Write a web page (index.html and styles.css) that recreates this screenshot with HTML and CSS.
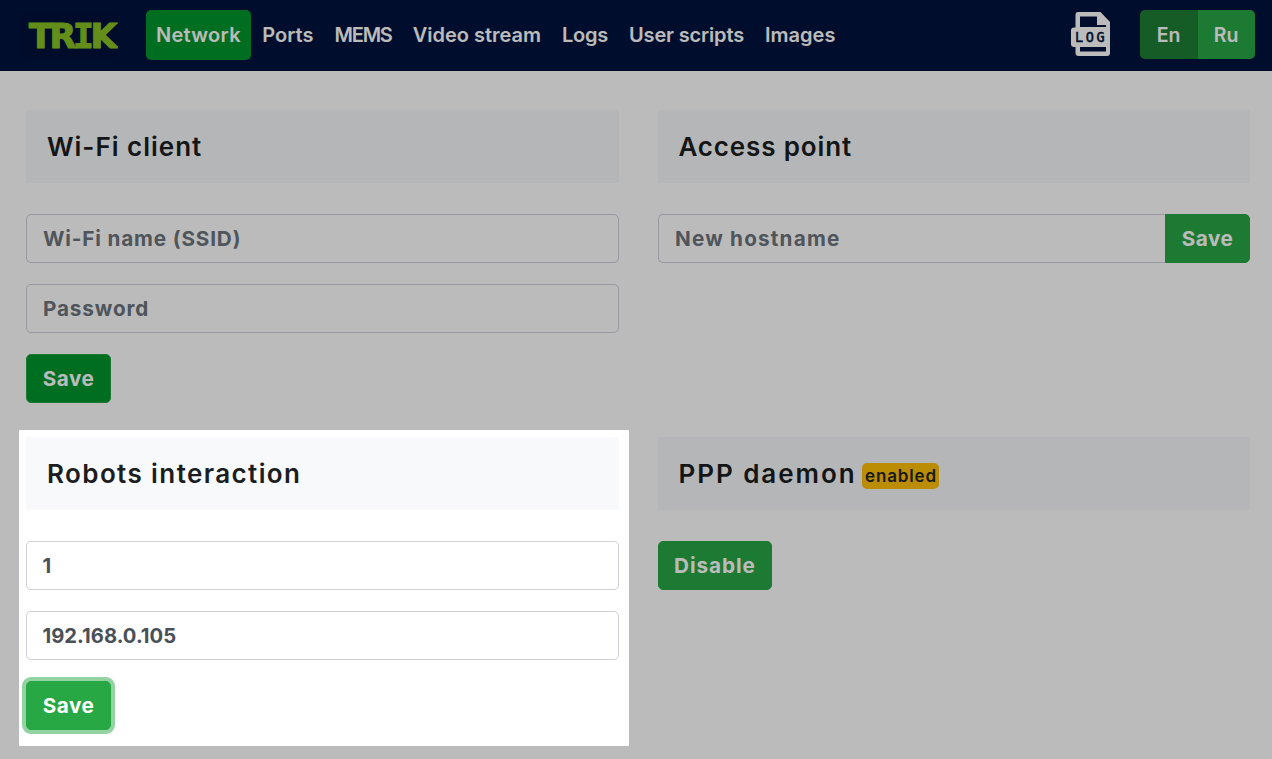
FILE: index.html
```
<!DOCTYPE html>
<html lang="en">
<head>
<meta charset="utf-8">
<title>TRIK</title>
<link rel="stylesheet" href="styles.css">
</head>
<body>
<header class="navbar">
  <a class="brand" href="#">
    <svg width="98" height="46" viewBox="0 0 98 46" role="img" aria-label="TRIK">
      <text class="brand-text" x="9" y="35.500">TR<tspan class="brand-slab">I</tspan>K</text>
    </svg>
  </a>
  <nav class="menu">
    <a class="menu-link active" href="#">Network</a>
    <a class="menu-link" href="#">Ports</a>
    <a class="menu-link mems" href="#">MEMS</a>
    <a class="menu-link" href="#">Video stream</a>
    <a class="menu-link logs" href="#">Logs</a>
    <a class="menu-link scripts" href="#">User scripts</a>
    <a class="menu-link" href="#">Images</a>
  </nav>
  <a class="log-icon" href="#">
    <svg width="40" height="44" viewBox="0 0 40 44" role="img" aria-label="Log">
      <path fill="#fff" fill-rule="evenodd" d="M7 0H29.500L39 10V41Q39 44 36 44H7.500Q4.500 44 4.500 41V35H3Q0 35 0 32V18.500Q0 15.500 3 15.500H4.500V3Q4.500 0 7 0ZM9 4.500V15H35V13H26V4.500ZM9 35V39.500H35V35Z"/>
      <text class="log-text" x="4" y="29.800">LOG</text>
    </svg>
  </a>
  <div class="lang">
    <button class="lang-btn current">En</button>
    <button class="lang-btn">Ru</button>
  </div>
</header>

<main class="grid">
  <section class="card">
    <h2 class="title wifi">Wi-Fi client</h2>
    <input class="field ssid" placeholder="Wi-Fi name (SSID)">
    <input class="field" placeholder="Password">
    <button class="btn hover">Save</button>
  </section>
  <section class="card">
    <h2 class="title access">Access point</h2>
    <div class="group">
      <input class="field host" placeholder="New hostname">
      <button class="btn">Save</button>
    </div>
  </section>
  <section class="card spotlight">
    <h2 class="title robots">Robots interaction</h2>
    <input class="field number" value="1">
    <input class="field number" value="192.168.0.105">
    <button class="btn focused">Save</button>
  </section>
  <section class="card">
    <h2 class="title ppp">PPP daemon<span class="badge">enabled</span></h2>
    <button class="btn disable">Disable</button>
  </section>
</main>
</body>
</html>
```
FILE: styles.css
```
* { box-sizing: border-box; }

body {
  margin: 0;
  height: 759px;
  overflow: hidden;
  background: #fff;
  color: #1b1d20;
  font-family: Inter, "Open Sans", sans-serif;
}

a { color: inherit; text-decoration: none; }

.navbar {
  display: flex;
  align-items: center;
  height: 71px;
  padding: 0 17px 1px 20px;
  background: #00133c;
  color: #fff;
}

.brand { display: flex; margin-right: 28px; }
.brand svg { background: #001138; }
.brand-text {
  fill: #89c224;
  stroke: #89c224;
  stroke-width: 1.2;
  font: bold 34.5px "DejaVu Sans", sans-serif;
  letter-spacing: -3.1px;
}
.brand-slab { font-family: "DejaVu Sans Mono", monospace; }

.menu { display: flex; flex: 1; }
.menu-link {
  height: 50px;
  margin-right: 1px;
  padding: 0 10px;
  border-radius: 5px;
  font-size: 20px;
  font-weight: 600;
  line-height: 50px;
  white-space: nowrap;
}
.menu-link.active { margin-right: 1.5px; background: #00972e; letter-spacing: .3px; }
.menu-link.mems { letter-spacing: -1.2px; }
.menu-link.logs { letter-spacing: -.25px; }
.menu-link.scripts { letter-spacing: -.16px; }

.log-icon { display: flex; margin: 0 29px 1.5px 0; }
.log-text {
  fill: #00133c;
  stroke: #00133c;
  stroke-width: .5;
  font: 13.5px "DejaVu Sans Mono", monospace;
  letter-spacing: 2.6px;
}

.lang { display: flex; height: 49px; margin-bottom: 1px; border-radius: 5px; overflow: hidden; }
.lang-btn {
  width: 57px;
  padding: 0 1px 0 0;
  border: 0;
  background: #28a745;
  color: #fff;
  font: 600 19.5px Inter, sans-serif;
}
.lang-btn.current { width: 58px; background: #1e7e34; }

.grid {
  display: grid;
  grid-template-columns: 593px 592px;
  gap: 34px 39px;
  padding: 39px 22px 0 26px;
}

.card {
  display: flex;
  flex-direction: column;
  align-items: flex-start;
  gap: 21px;
}

.title {
  display: flex;
  align-items: center;
  width: 100%;
  height: 73px;
  margin: 0 0 10px;
  padding: 0 21px 1px;
  background: #f7f9fb;
  font-size: 26px;
  font-weight: 600;
  letter-spacing: 1px;
}
.title.robots { letter-spacing: 1.4px; }
.title.access { padding-left: 20.5px; letter-spacing: .85px; }
.title.ppp { padding-left: 20.5px; letter-spacing: 1.95px; }

.badge {
  height: 26px;
  margin: 5px 0 0 5.5px;
  padding: 0 2.5px 0 3px;
  border-radius: 5px;
  background: #ffc107;
  color: #212529;
  font-size: 17px;
  line-height: 26px;
  letter-spacing: .85px;
}

.field {
  width: 100%;
  height: 49px;
  padding: 0 16px;
  border: 1px solid #ced0da;
  border-radius: 5px;
  background: #fff;
  color: #495057;
  font: 700 20.7px Inter, sans-serif;
  letter-spacing: .85px;
}
.field::placeholder { color: #6c757d; opacity: 1; }
.field.host { letter-spacing: 1.2px; }
.field.number { padding-left: 15.5px; font-size: 20.2px; letter-spacing: .03px; }

.btn {
  flex: none;
  width: 85px;
  height: 49px;
  padding: 0;
  border: 1px solid #28a745;
  border-radius: 5px;
  background: #28a745;
  color: #fff;
  font: 700 20.7px Inter, sans-serif;
  letter-spacing: .5px;
}
.btn.hover { background: #00972e; }
.btn.disable { width: 114px; letter-spacing: .95px; }
.btn.focused { box-shadow: 0 0 0 4px rgba(40, 167, 69, .5); }

.group { display: flex; width: 100%; }
.group .field { flex: 1; width: auto; min-width: 0; border-right: 0; border-radius: 5px 0 0 5px; }
.group .btn { border-radius: 0 5px 5px 0; }

/* Dims everything on the page outside the highlighted card */
.spotlight { position: relative; }
.spotlight::after {
  content: "";
  position: absolute;
  z-index: 1;
  inset: -7px -10px -16px -7px;
  box-shadow: 0 0 0 2000px rgba(0, 0, 0, .265);
  pointer-events: none;
}
```
